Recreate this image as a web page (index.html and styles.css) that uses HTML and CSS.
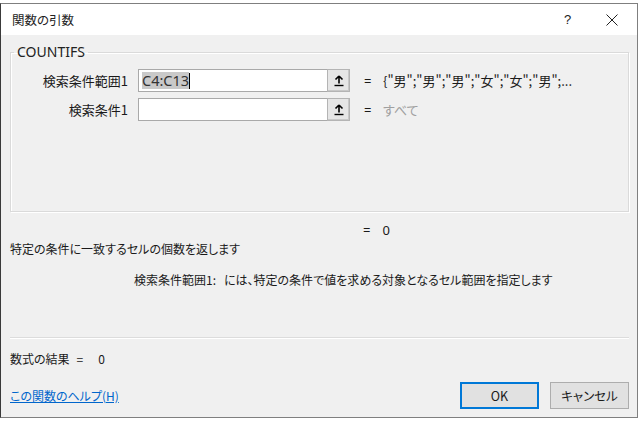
FILE: index.html
```html
<!DOCTYPE html>
<html lang="ja">
<head>
<meta charset="utf-8">
<title>関数の引数</title>
<link rel="stylesheet" href="styles.css">
</head>
<body>
<div class="sheet-top"></div>
<div class="dialog">
  <div class="titlebar">
    <span class="title">関数の引数</span>
    <span class="help">?</span>
    <span class="close"><svg width="12" height="12" viewBox="0 0 12 12"><path d="M0.5 0.5 L11.5 11.5 M11.5 0.5 L0.5 11.5" stroke="#222" stroke-width="1" fill="none"/></svg></span>
  </div>
  <div class="body">
    <fieldset class="group">
      <legend>COUNTIFS</legend>
      <div class="args">
        <div class="arg">
          <label class="arg-label">検索条件範囲1</label>
          <div class="field">
            <div class="input"><span class="sel">C4:C13</span><span class="caret"></span></div>
            <span class="ref"><svg width="10" height="12" viewBox="0 0 10 12"><path d="M5 1 L1.5 4.5 M5 1 L8.5 4.5 M5 1 L5 8.5" stroke="#000" stroke-width="1.6" fill="none"/><path d="M0.5 10.5 H9.5" stroke="#000" stroke-width="1.4"/></svg></span>
          </div>
          <span class="eq">=</span>
          <span class="val">{"男";"男";"男";"女";"女";"男";...</span>
        </div>
        <div class="arg">
          <label class="arg-label">検索条件1</label>
          <div class="field">
            <div class="input"></div>
            <span class="ref"><svg width="10" height="12" viewBox="0 0 10 12"><path d="M5 1 L1.5 4.5 M5 1 L8.5 4.5 M5 1 L5 8.5" stroke="#000" stroke-width="1.6" fill="none"/><path d="M0.5 10.5 H9.5" stroke="#000" stroke-width="1.4"/></svg></span>
          </div>
          <span class="eq">=</span>
          <span class="val muted">すべて</span>
        </div>
      </div>
    </fieldset>
    <div class="result"><span class="eq">=</span><span>0</span></div>
    <p class="desc">特定の条件に一致するセルの個数を返します</p>
    <p class="argdesc"><span class="argname">検索条件範囲1:</span><span>には、特定の条件で値を求める対象となるセル範囲を指定します</span></p>
    <div class="sep"></div>
    <div class="formula"><span>数式の結果</span><span class="feq">=</span><span>0</span></div>
    <div class="footer">
      <a class="helplink" href="#">この関数のヘルプ(H)</a>
      <div class="buttons">
        <button class="btn ok">OK</button>
        <button class="btn">キャンセル</button>
      </div>
    </div>
  </div>
</div>
<div class="sheet-bottom"></div>
</body>
</html>
```

FILE: styles.css
```css
html, body {
  margin: 0;
  padding: 0;
  background: #ffffff;
}
body {
  width: 640px;
  height: 422px;
  overflow: hidden;
  font-family: "Noto Sans CJK JP", "Noto Sans", sans-serif;
  font-size: 12px;
  color: #1a1a1a;
  font-feature-settings: "palt";
}
.sheet-top {
  height: 3px;
}
.dialog {
  width: 636px;
  height: 413px;
  border: 1px solid #7f7f7f;
  border-left-color: #3a3a3a;
  background: #f0f0f0;
  display: flex;
  flex-direction: column;
}
.titlebar {
  height: 31px;
  background: #ffffff;
  display: flex;
  align-items: center;
  padding-left: 11px;
}
.title {
  font-size: 12.5px;
  flex: 1;
  color: #222;
}
.help {
  font-family: "Liberation Sans", sans-serif;
  font-size: 13px;
  width: 42px;
  color: #222;
}
.close {
  width: 31px;
  display: flex;
  align-items: center;
}
.body {
  padding: 0 8px 0 9px;
  display: flex;
  flex-direction: column;
}
.group {
  margin: 10px 0 0 0;
  padding: 10px 0 90px 0;
  border: 1px solid #dadada;
  box-shadow: inset 1px 1px 0 #ffffff, 1px 1px 0 #ffffff;
  min-width: 0;
}
.group legend {
  margin-left: 3px;
  padding: 0 3px;
  line-height: 14px;
  font-family: "Noto Sans", sans-serif;
  font-size: 14px;
  color: #222;
}
.args {
  display: flex;
  flex-direction: column;
  gap: 6px;
}
.arg {
  display: grid;
  grid-template-columns: 117px 222px 21px 1fr;
  align-items: center;
  height: 23px;
  font-size: 13px;
}
.arg-label {
  grid-column: 1;
  width: 117px;
  text-align: right;
}
.field {
  grid-column: 2;
  margin-left: 10px;
  width: 212px;
  display: flex;
  height: 23px;
}
.input {
  flex: 1;
  background: #ffffff;
  border: 1px solid #a9a9a9;
  border-right: none;
  display: flex;
  align-items: center;
  padding-left: 3px;
}
.sel {
  background: #c9c9c9;
  color: #333;
  line-height: 17px;
  font-family: "Noto Sans", sans-serif;
  font-size: 14.5px;
}
.caret {
  width: 1px;
  height: 16px;
  background: #000;
}
.ref {
  width: 21px;
  background: #e6e6e6;
  border: 1px solid #b4b4b4;
  box-shadow: inset -1px -1px 0 #c8c8c8;
  display: flex;
  align-items: center;
  justify-content: center;
}
.eq {
  grid-column: 3;
  margin-left: 14px;
  font-family: "Noto Sans", sans-serif;
}
.val {
  grid-column: 4;
  margin-left: 12px;
  white-space: nowrap;
  color: #1a1a1a;
}
.muted {
  color: #a0a0a0;
}
.result {
  margin-top: 10px;
  padding-left: 353px;
  display: flex;
  gap: 12px;
  line-height: 16px;
  font-size: 13px;
  font-family: "Noto Sans", sans-serif;
}
.result .eq { margin-left: 0; }
.desc {
  margin: 3px 0 0 0;
  line-height: 16px;
}
.argdesc {
  margin: 15px 0 0 0;
  padding-left: 124px;
  line-height: 16px;
  display: flex;
  gap: 8px;
}
.sep {
  margin-top: 49px;
  height: 1px;
  background: #dcdcdc;
  box-shadow: 0 1px 0 #ffffff;
}
.formula {
  margin-top: 13px;
  line-height: 16px;
  display: flex;
  gap: 7px;
}
.formula .feq { margin-right: 8px; }
.footer {
  margin-top: 15px;
  display: flex;
  align-items: center;
  justify-content: space-between;
}
.helplink {
  color: #0066cc;
  font-size: 12px;
  text-decoration: underline;
}
.buttons {
  display: flex;
  gap: 11px;
}
.btn {
  font-family: "Noto Sans CJK JP", "Noto Sans", sans-serif;
  font-size: 12.5px;
  color: #1a1a1a;
  background: #e1e1e1;
  border: 1px solid #adadad;
  width: 79px;
  height: 27px;
  padding: 0;
  font-feature-settings: "palt";
}
.btn.ok {
  border: 2px solid #0078d7;
}
```
